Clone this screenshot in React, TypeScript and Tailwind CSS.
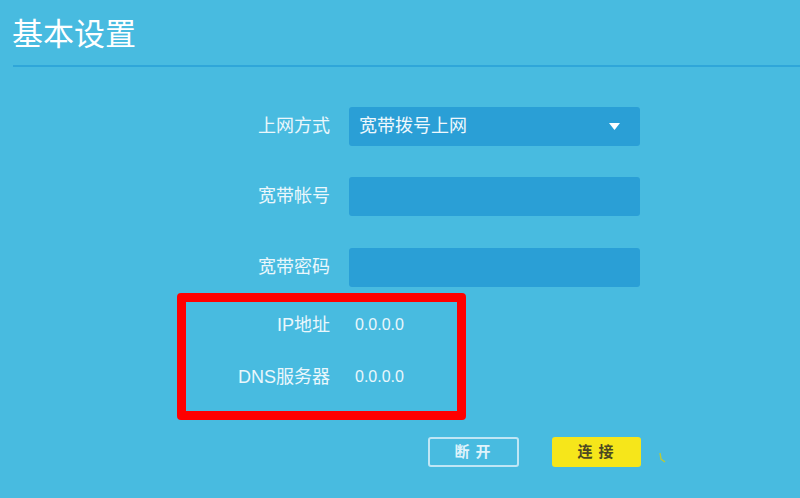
import React from "react";

const cjk = { fontFamily: '"Liberation Sans", "Noto Sans CJK SC", sans-serif' };

function Row({ label, children, mt }: { label: string; children: React.ReactNode; mt: string }) {
  return (
    <div className={`flex items-center ${mt}`}>
      <div className="w-[330px] text-right text-[18px] text-[#eaf7fc]">{label}</div>
      <div className="ml-[19px]">{children}</div>
    </div>
  );
}

export default function App() {
  return (
    <div className="relative w-[800px] h-[498px] overflow-hidden bg-[#48bbe0]" style={cjk}>
      <div className="h-[65px] pl-[12px] pt-[18px]">
        <div className="text-[31px] leading-[34px] text-white">基本设置</div>
      </div>
      <div className="ml-[13px] h-[2px] bg-[#2fa6d9]" />

      <div className="flex flex-col">
        <Row label="上网方式" mt="mt-[40px]">
          <div className="flex h-[39px] w-[291px] items-center justify-between rounded-[3px] bg-[#2a9fd6] pl-[10px] pr-[20px]">
            <span className="text-[18px] text-[#eef8fd]">宽带拨号上网</span>
            <svg width="11" height="7" viewBox="0 0 11 7">
              <path d="M0 0 L11 0 L5.5 7 Z" fill="#ffffff" />
            </svg>
          </div>
        </Row>
        <Row label="宽带帐号" mt="mt-[31px]">
          <div className="h-[39px] w-[291px] rounded-[3px] bg-[#2a9fd6]" />
        </Row>
        <Row label="宽带密码" mt="mt-[32px]">
          <div className="h-[39px] w-[291px] rounded-[3px] bg-[#2a9fd6]" />
        </Row>
        <div className="mt-[23px] flex h-[30px] items-center">
          <div className="w-[330px] text-right text-[18px] text-[#eaf7fc]">IP地址</div>
          <div className="ml-[25px] text-[16px] text-[#eaf7fc]">0.0.0.0</div>
        </div>
        <div className="mt-[22px] flex h-[30px] items-center">
          <div className="w-[330px] text-right text-[18px] text-[#eaf7fc]">DNS服务器</div>
          <div className="ml-[25px] text-[16px] text-[#eaf7fc]">0.0.0.0</div>
        </div>
        <div className="mt-[45px] flex h-[30px] items-center">
          <div className="ml-[428px] flex h-[30px] w-[91px] items-center justify-center rounded-[3px] border-2 border-[#bfe6f5] pl-[4px] text-[15px] font-semibold tracking-[6px] text-[#dff3fb]">
            断开
          </div>
          <div className="ml-[33px] flex h-[30px] w-[89px] items-center justify-center rounded-[3px] bg-[#f6e61a] pl-[4px] text-[15px] font-semibold tracking-[6px] text-[#4d4a22]">
            连接
          </div>
        </div>
      </div>

      <div className="absolute left-[177px] top-[293px] h-[127px] w-[289px] rounded-[4px] border-[9px] border-[#ff0000]" />
      <svg className="absolute left-[659px] top-[452px]" width="8" height="12" viewBox="0 0 8 12">
        <path d="M1 1 L2 7 L6 10" stroke="#b9c93a" strokeWidth="1.5" fill="none" />
      </svg>
    </div>
  );
}
